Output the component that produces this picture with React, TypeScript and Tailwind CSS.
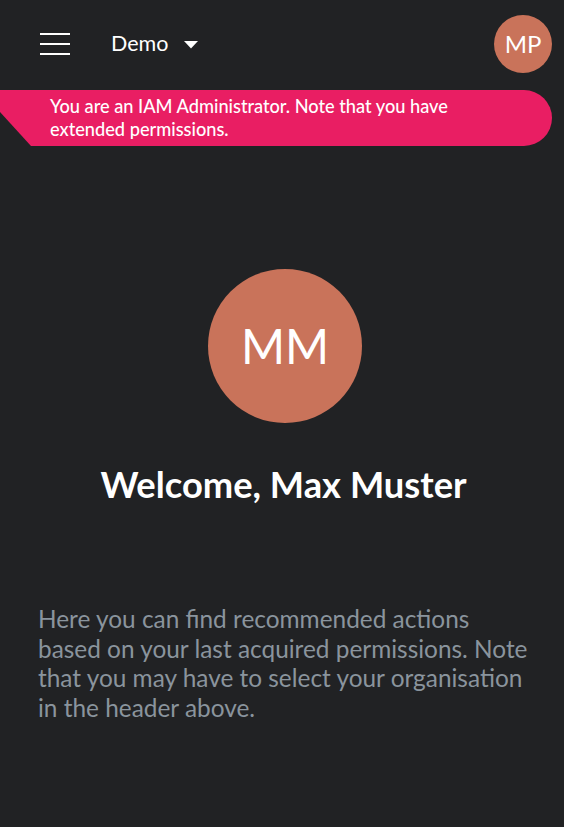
export default function App() {
  return (
    <div className="min-h-[827px] w-full bg-[#212224] font-['Lato',sans-serif] text-white">
      {/* Header */}
      <div className="flex h-[90px] items-center pl-[40px] pr-[12px] pb-[2px]">
        <button className="flex h-[22px] w-[30px] flex-col justify-between">
          <span className="h-[2px] w-full bg-white" />
          <span className="h-[2px] w-full bg-white" />
          <span className="h-[2px] w-full bg-white" />
        </button>
        <div className="ml-[41px] flex items-center gap-[15px]">
          <span className="text-[21.5px] leading-none">Demo</span>
          <svg width="16" height="8" viewBox="0 0 16 8" className="mt-[2px]">
            <polygon points="1,0 15,0 8,7.5" fill="#ffffff" />
          </svg>
        </div>
        <div className="ml-auto flex h-[58px] w-[58px] items-center justify-center rounded-full bg-[#c9735a] text-[24px] leading-none">
          MP
        </div>
      </div>

      {/* Admin banner */}
      <div className="relative mr-[12px] h-[56px] rounded-r-[28px] bg-[#e91e63] pl-[50px] pt-[5px] text-[18.2px] font-medium leading-[23px]">
        <svg
          width="31"
          height="34"
          viewBox="0 0 31 34"
          className="absolute bottom-0 left-0"
        >
          <polygon points="0,0 0,34 31,34" fill="#212224" />
        </svg>
        <p className="relative">
          You are an IAM Administrator. Note that you have
          <br />
          extended permissions.
        </p>
      </div>

      {/* Welcome */}
      <div className="flex flex-col items-center pt-[123px]">
        <div className="ml-[6px] flex h-[154px] w-[154px] items-center justify-center rounded-full bg-[#c9735a] text-[47.5px] leading-none">
          MM
        </div>
        <h1 className="mt-[43px] ml-[3px] text-[36.3px] font-bold leading-none">Welcome, Max Muster</h1>
      </div>

      <p className="pl-[38px] pr-[12px] pt-[102px] text-[24.4px] leading-[29.4px] text-[#8a949d]">
        Here you can find recommended actions
        <br />
        based on your last acquired permissions. Note
        <br />
        that you may have to select your organisation
        <br />
        in the header above.
      </p>
    </div>
  );
}
